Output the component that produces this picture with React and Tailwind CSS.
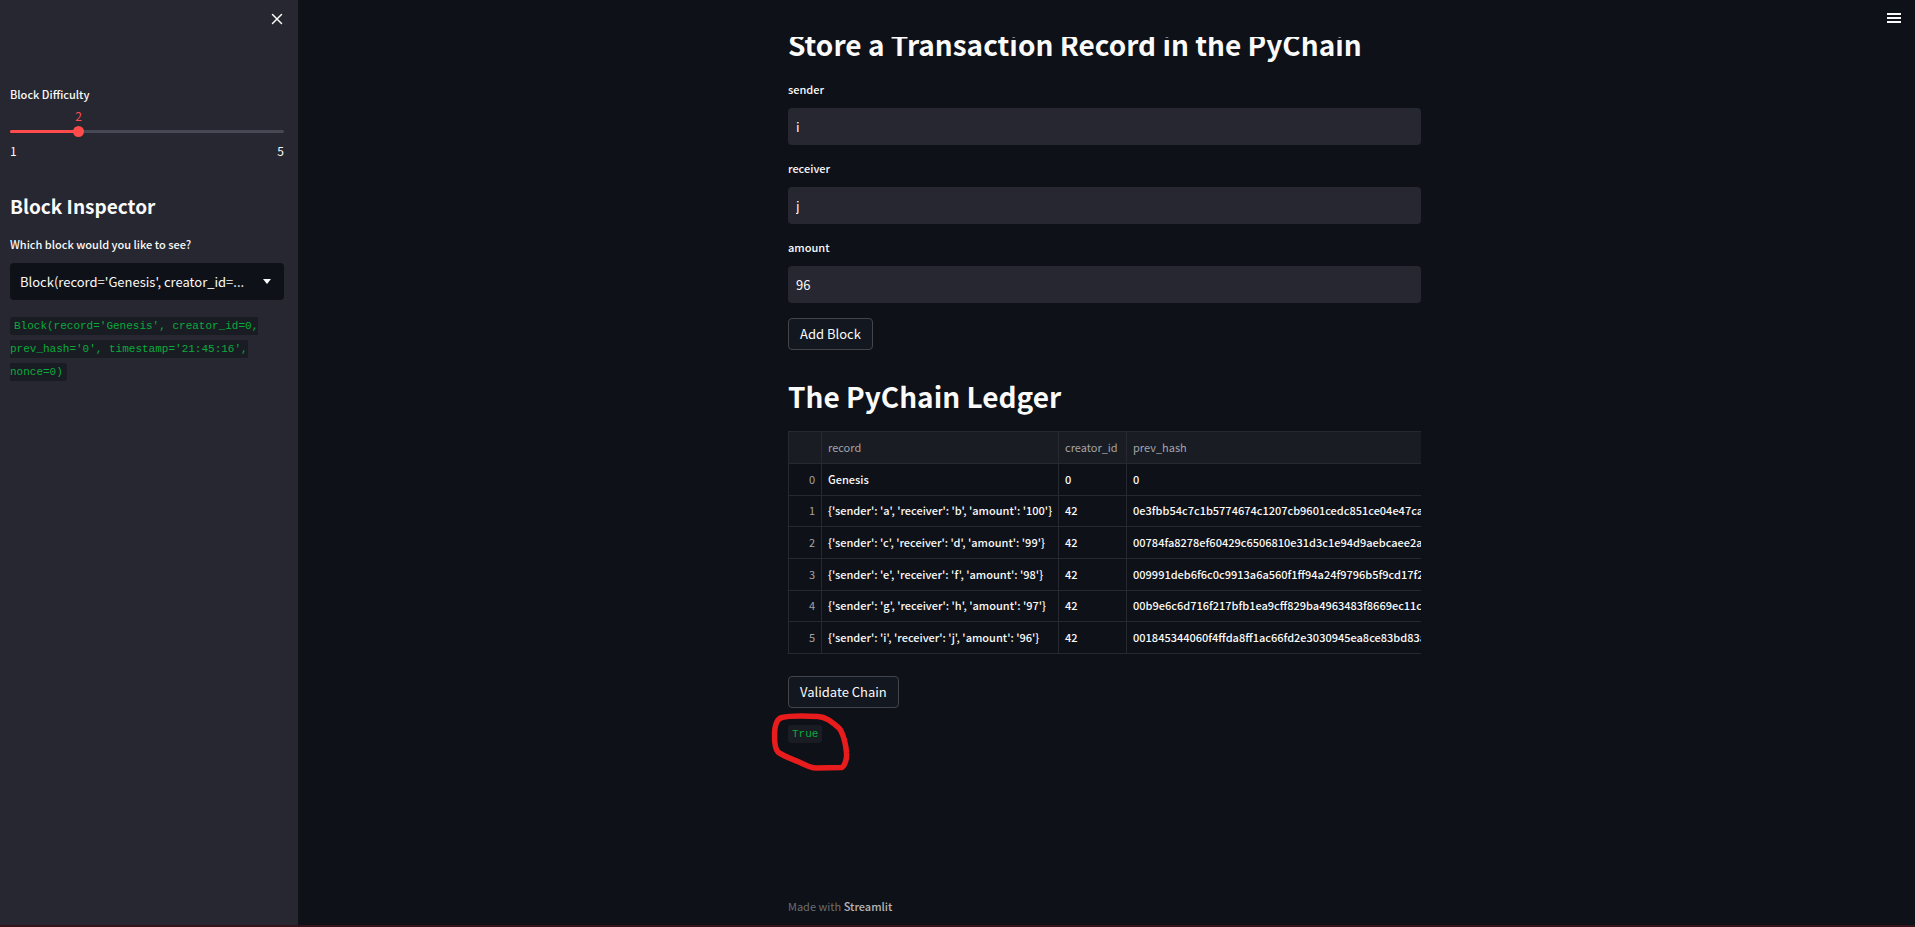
import { useState } from "react";

const rows = [
  ["Genesis", "0", "0"],
  ["{'sender': 'a', 'receiver': 'b', 'amount': '100'}", "42", "0e3fbb54c7c1b5774674c1207cb9601cedc851ce04e47ca"],
  ["{'sender': 'c', 'receiver': 'd', 'amount': '99'}", "42", "00784fa8278ef60429c6506810e31d3c1e94d9aebcaee2a"],
  ["{'sender': 'e', 'receiver': 'f', 'amount': '98'}", "42", "009991deb6f6c0c9913a6a560f1ff94a24f9796b5f9cd17f2"],
  ["{'sender': 'g', 'receiver': 'h', 'amount': '97'}", "42", "00b9e6c6d716f217bfb1ea9cff829ba4963483f8669ec11c"],
  ["{'sender': 'i', 'receiver': 'j', 'amount': '96'}", "42", "001845344060f4ffda8ff1ac66fd2e3030945ea8ce83bd83a"],
];

const genesis = "Block(record='Genesis', creator_id=0, prev_hash='0', timestamp='21:45:16', nonce=0)";

function Code({ children }) {
  return (
    <code className="rounded-[3px] bg-[#1a1c24] px-1 py-[3px] font-['Liberation_Mono',monospace] text-[11px] text-[#09ab3b]">
      {children}
    </code>
  );
}

function Field({ id, value }) {
  return (
    <div className="mb-[13px]">
      <label htmlFor={id} className="mb-[9px] block text-[11px] leading-5 font-medium">
        {id}
      </label>
      <input
        id={id}
        defaultValue={value}
        className="block h-[37px] w-full rounded-[4px] bg-[#262730] px-2 text-[13px] outline-none"
      />
    </div>
  );
}

function Button({ children }) {
  return (
    <button className="block h-8 rounded-[4px] border border-[#43454c] bg-[#13171f] px-[11px] text-[13px] leading-5 whitespace-nowrap">
      {children}
    </button>
  );
}

function Sidebar() {
  const [difficulty, setDifficulty] = useState(2);
  const percent = (difficulty - 1) * 25;
  return (
    <aside className="flex w-[298px] shrink-0 flex-col bg-[#262730] pr-[14px] pl-[10px]">
      <div className="flex h-[84px] justify-end pt-[13px]">
        <button aria-label="Close sidebar" className="h-3 w-[14px]">
          <svg viewBox="0 0 14 12" className="h-3 w-[14px]" fill="none" stroke="#fafafa" strokeWidth="1.5" strokeLinecap="round">
            <path d="M2.5 1.5l9 9M11.5 1.5l-9 9" />
          </svg>
        </button>
      </div>
      <label htmlFor="difficulty" className="text-[11px] leading-5 font-medium">
        Block Difficulty
      </label>
      <div className="relative mt-[5px] h-[21px] text-[12px] leading-[14px] text-[#ff4b4b]">
        <span className="absolute -translate-x-1/2" style={{ left: `${percent}%` }}>
          {difficulty}
        </span>
      </div>
      <div className="relative h-[3px] rounded-full bg-[#464853]">
        <div className="h-full rounded-full bg-[#ff4b4b]" style={{ width: `${percent}%` }} />
        <input
          id="difficulty"
          type="range"
          min="1"
          max="5"
          value={difficulty}
          onChange={(e) => setDifficulty(Number(e.target.value))}
          className="absolute -inset-x-[5px] -top-1 h-[11px] w-[284px] appearance-none bg-transparent [&::-webkit-slider-thumb]:size-[11px] [&::-webkit-slider-thumb]:appearance-none [&::-webkit-slider-thumb]:rounded-full [&::-webkit-slider-thumb]:bg-[#ff4b4b]"
        />
      </div>
      <div className="mt-2 flex justify-between text-[12px] leading-5">
        <span>1</span>
        <span>5</span>
      </div>
      <h2 className="mt-[31px] text-[19px] leading-7 font-bold">Block Inspector</h2>
      <label htmlFor="block" className="mt-[14px] mb-[9px] text-[11px] leading-5 font-medium">
        Which block would you like to see?
      </label>
      <div className="relative">
        <select
          id="block"
          className="block h-[37px] w-full appearance-none overflow-hidden rounded-[4px] bg-[#0e1117] pr-8 pl-[10px] text-[13px] whitespace-nowrap outline-none"
        >
          <option>Block(record='Genesis', creator_id=...</option>
        </select>
        <svg viewBox="0 0 8 5" className="pointer-events-none absolute top-4 right-[13px] h-[5px] w-2" fill="#fafafa">
          <path d="M0 0h8L4 5z" />
        </svg>
      </div>
      <p className="mt-[15px] font-['Liberation_Mono',monospace] text-[11px] leading-[23px]">
        <Code>{genesis}</Code>
      </p>
    </aside>
  );
}

function Ledger() {
  return (
    <div className="overflow-hidden">
      <table className="h-[223px] border-collapse text-left text-[11px] leading-4 whitespace-nowrap [&_td]:border [&_td]:border-[#262a30] [&_td]:px-[6px] [&_td]:pb-px [&_td]:font-medium [&_th]:border [&_th]:border-[#262a30] [&_th]:px-[6px] [&_th]:pb-px [&_th]:font-normal [&_th]:text-[#a3a4a8]">
        <thead className="bg-[#1a1c24]">
          <tr className="h-8">
            <th className="w-[33px] min-w-[33px]" />
            <th className="w-[236px]">record</th>
            <th className="min-w-[68px]">creator_id</th>
            <th className="min-w-[330px]">prev_hash</th>
          </tr>
        </thead>
        <tbody>
          {rows.map((cells, i) => (
            <tr key={i}>
              <th className="text-right">{i}</th>
              {cells.map((cell, j) => (
                <td key={j}>{cell}</td>
              ))}
            </tr>
          ))}
        </tbody>
      </table>
    </div>
  );
}

function Scribble() {
  return (
    <svg viewBox="0 0 80 60" className="pointer-events-none absolute -top-[11px] -left-[18px] h-[60px] w-20" fill="none" stroke="#e81c1c" strokeWidth="5.5" strokeLinejoin="round" strokeLinecap="round">
      <path d="M12 5.500C6 7 4.500 14 4.500 24C4.500 32 5 37 8 40C13 44 22 47 29 50C37 54 42 56 46 56L72 55.500C75 53 77 47 76.500 41C76 32 73 21 69 16C63 11 57 5 48 4.500C38 4 20 3.500 12 5.500Z" />
    </svg>
  );
}

export default function App() {
  return (
    <div className="flex h-screen flex-col bg-[#0e1117] font-['Noto_Sans_CJK_KR',sans-serif] text-[#fafafa]">
      <div className="flex min-h-0 flex-1">
        <Sidebar />
        <div className="flex min-w-0 flex-1 flex-col">
          <header className="flex h-[37px] shrink-0 justify-end pt-[13px] pr-[14px]">
            <button aria-label="Menu" className="h-[10px] w-[14px]">
              <svg viewBox="0 0 14 10" className="h-[10px] w-[14px]" fill="#fafafa">
                <path d="M0 0h14v2H0zM0 4h14v2H0zM0 8h14v2H0z" />
              </svg>
            </button>
          </header>
          <div className="flex min-h-0 flex-1 flex-col overflow-hidden pr-1">
            <main className="mx-auto flex w-full max-w-[633px] flex-1 flex-col">
              <h1 className="-mt-[13px] mb-[15px] text-[28px] leading-10 font-bold whitespace-nowrap">
                Store a Transaction Record in the PyChain
              </h1>
              <Field id="sender" value="i" />
              <Field id="receiver" value="j" />
              <Field id="amount" value="96" />
              <div className="mt-0.5">
                <Button>Add Block</Button>
              </div>
              <h1 className="mt-[26px] mb-[15px] text-[28px] leading-10 font-bold">The PyChain Ledger</h1>
              <Ledger />
              <div className="mt-[22px]">
                <Button>Validate Chain</Button>
              </div>
              <div className="relative mt-[15px] font-['Liberation_Mono',monospace] text-[11px] leading-[23px]">
                <Code>True</Code>
                <Scribble />
              </div>
              <footer className="mt-auto pb-[9px] text-[11px] leading-5 text-[#6b6d72]">
                Made with <a href="#streamlit" className="font-medium text-[#b5b6b9]">Streamlit</a>
              </footer>
            </main>
          </div>
        </div>
      </div>
      <div className="h-[2px] shrink-0 bg-[#34131b]" />
    </div>
  );
}
